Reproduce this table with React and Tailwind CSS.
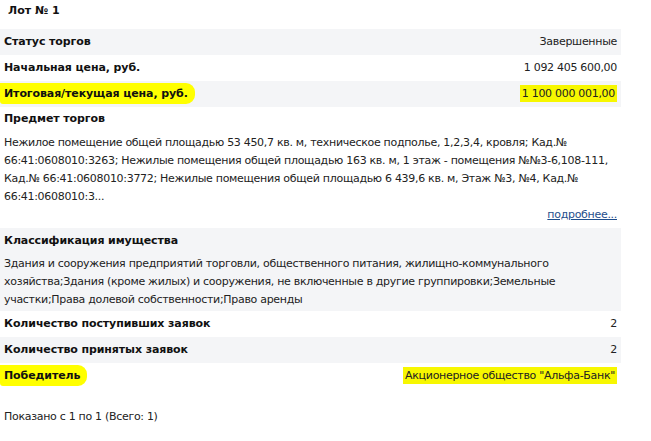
import React from "react";

const font = { fontFamily: '"DejaVu Sans", Verdana, sans-serif' };

function Row({ label, value, gray, hlLabel, hlValue }) {
  return (
    <div className={`flex h-[26px] items-center justify-between pl-[4px] pr-[4px] ${gray ? "bg-[#f4f5f7]" : ""}`}>
      <span className="font-bold text-[11px] text-[#111] tracking-[-0.1px]">
        {hlLabel ? (
          <span className="bg-[#ffff00] -ml-[4px] pl-[4px] pr-[7px] pt-[4px] pb-[4px] rounded-r-[9px] rounded-bl-[3px]">{label}</span>
        ) : label}
      </span>
      <span className="text-[11px] text-[#222] tracking-[-0.3px]">
        {hlValue ? <span className="bg-[#f7f700] px-[2px] py-[2px]">{value}</span> : value}
      </span>
    </div>
  );
}

export default function App() {
  return (
    <div className="w-[651px] h-[441px] bg-white" style={font}>
      <div className="w-[621px]">
        <div className="h-[29px] pl-[8px] pt-[3px] font-bold text-[11px] text-[#111]">Лот № 1</div>
        <Row label="Статус торгов" value="Завершенные" gray />
        <Row label="Начальная цена, руб." value="1 092 405 600,00" />
        <Row label="Итоговая/текущая цена, руб." value="1 100 000 001,00" gray hlLabel hlValue />
        <div className="px-[4px] pb-[4px]">
          <div className="h-[24px] flex items-center font-bold text-[11px] text-[#111] tracking-[-0.1px]">Предмет торгов</div>
          <div className="text-[11px] leading-[18px] text-[#222] pt-[3px] tracking-[-0.3px]">
            Нежилое помещение общей площадью 53 450,7 кв. м, техническое подполье, 1,2,3,4, кровля; Кад.№ 66:41:0608010:3263; Нежилые помещения общей площадью 163 кв. м, 1 этаж - помещения №№3-6,108-111, Кад.№ 66:41:0608010:3772; Нежилые помещения общей площадью 6 439,6 кв. м, Этаж №3, №4, Кад.№ 66:41:0608010:3...
          </div>
          <div className="flex justify-end text-[11px] leading-[18px] tracking-[-0.3px]">
            <span className="text-[#1f4e8c] underline">подробнее...</span>
          </div>
        </div>
        <div className="bg-[#f4f5f7] px-[4px] pb-[2px]">
          <div className="h-[27px] flex items-center font-bold text-[11px] text-[#111] tracking-[-0.1px]">Классификация имущества</div>
          <div className="text-[11px] leading-[18px] text-[#222] tracking-[-0.3px]">
            Здания и сооружения предприятий торговли, общественного питания, жилищно-коммунального хозяйства;Здания (кроме жилых) и сооружения, не включенные в другие группировки;Земельные участки;Права долевой собственности;Право аренды
          </div>
        </div>
        <Row label="Количество поступивших заявок" value="2" />
        <Row label="Количество принятых заявок" value="2" gray />
        <Row label="Победитель" value={'Акционерное общество "Альфа-Банк"'} hlLabel hlValue />
        <div className="pl-[4px] pt-[20px] text-[11px] text-[#222] tracking-[-0.3px]">Показано с 1 по 1 (Всего: 1)</div>
      </div>
    </div>
  );
}
